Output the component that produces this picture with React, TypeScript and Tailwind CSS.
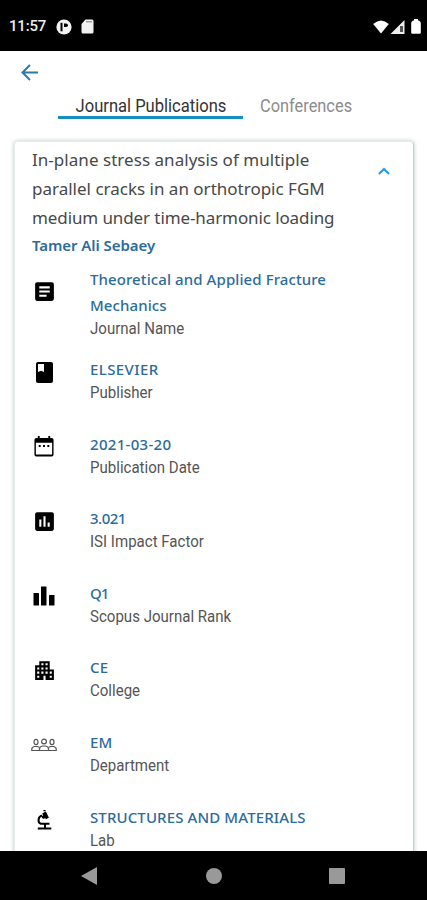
import type { ReactNode } from "react";
import clsx from "clsx";
import { MdApartment, MdArticle, MdInsertChart } from "react-icons/md";

function BookIcon() {
  return (
    <svg viewBox="0 0 17 21" className="h-[21px] w-[17px]">
      <rect width="17" height="21" rx="2" fill="currentColor" />
      <path d="M2 2h6v8L5 8.800 2 10z" fill="#fff" />
    </svg>
  );
}

function CalendarIcon() {
  return (
    <svg viewBox="0 0 20 22" className="h-[21px] w-5" fill="currentColor">
      <path
        fillRule="evenodd"
        d="M3.500 0h2v2h9V0h2v2h1.500a2 2 0 0 1 2 2v15.500a2 2 0 0 1-2 2H2a2 2 0 0 1-2-2V4a2 2 0 0 1 2-2h1.500V0zM1.500 7v12.500h17V7h-17z"
      />
      <path d="M4.500 9.500h2v2h-2zM9 9.500h2v2H9zM13.500 9.500h2v2h-2z" />
    </svg>
  );
}

function BarsIcon() {
  return (
    <svg viewBox="0 0 22 20" className="h-5 w-[22px]" fill="currentColor">
      <rect x="0.500" y="7" width="5.500" height="12.500" rx="0.500" />
      <rect x="8" y="0.500" width="5.500" height="19" rx="0.500" />
      <rect x="16" y="9" width="5.500" height="10.500" rx="0.500" />
    </svg>
  );
}

function PeopleIcon() {
  return (
    <svg viewBox="0 0 26 14" className="h-3.5 w-[26px] shrink-0" fill="none" stroke="#555" strokeWidth="1.200">
      <ellipse cx="5" cy="4" rx="2" ry="2.600" />
      <ellipse cx="13" cy="3.500" rx="2.400" ry="2.300" />
      <ellipse cx="21" cy="4" rx="2" ry="2.600" />
      <path d="M8.500 12.500H.8V11q0-1.800 2.700-2.500h3l2 1M17.500 12.500h7.700V11q0-1.800-2.700-2.500h-3l-2 1" />
      <path d="M8.500 12.500V11q0-2.500 3-3h3q3 .5 3 3v1.500z" />
    </svg>
  );
}

function MicroscopeIcon() {
  return (
    <svg viewBox="0 0 15 20" className="h-5 w-[15px]" fill="none" stroke="currentColor">
      <path d="M7 2.500 9.500 7.500" strokeWidth="4" />
      <path d="M6.500.8 8.500.2M8.500 8.500l3-1.500" strokeWidth="1.500" />
      <path d="M5 5.500C1 6.500.2 12.500 4 13.800h8.500" strokeWidth="2" />
      <path d="M8 14v4M.8 18.500h13.500" strokeWidth="2" />
      <circle cx="6.500" cy="7" r="1.300" fill="currentColor" />
    </svg>
  );
}

type Detail = {
  icon: ReactNode;
  value: string;
  valueClass: string;
  label: string;
};

const details: Detail[] = [
  {
    icon: <MdArticle className="size-[25px] shrink-0" />,
    value: "Theoretical and Applied Fracture Mechanics",
    valueClass: "tracking-[0.090px]",
    label: "Journal Name",
  },
  { icon: <BookIcon />, value: "ELSEVIER", valueClass: "tracking-[0.4px]", label: "Publisher" },
  { icon: <CalendarIcon />, value: "2021-03-20", valueClass: "tracking-[0.3px]", label: "Publication Date" },
  { icon: <MdInsertChart className="size-[25px] shrink-0" />, value: "3.021", valueClass: "tracking-[-0.5px]", label: "ISI Impact Factor" },
  { icon: <BarsIcon />, value: "Q1", valueClass: "tracking-[-1px]", label: "Scopus Journal Rank" },
  { icon: <MdApartment className="size-[25px] shrink-0" />, value: "CE", valueClass: "tracking-[0.3px]", label: "College" },
  { icon: <PeopleIcon />, value: "EM", valueClass: "tracking-[0.1px]", label: "Department" },
  { icon: <MicroscopeIcon />, value: "STRUCTURES AND MATERIALS", valueClass: "tracking-[0.120px]", label: "Lab" },
];

function StatusBar() {
  return (
    <header className="flex h-[51px] shrink-0 items-center bg-black pl-[9px] pr-1.5 pt-0.5 text-[#eee]">
      <span className="w-12 font-['Roboto'] text-[15px] font-medium tracking-[-0.2px]">11:57</span>
      <svg viewBox="0 0 16 16" className="-ml-px h-4 w-4">
        <circle cx="8" cy="8" r="7.600" fill="#f2f2f2" />
        <path d="M5.500 3.800v8.500" fill="none" stroke="#000" strokeWidth="2" />
        <path d="M8 4.500h2q2 0 2 1.800t-2 1.800H8z" fill="#000" />
      </svg>
      <svg viewBox="0 0 13 15" className="ml-[9px] h-[15px] w-[13px]">
        <path d="M4.500.5H11a1.500 1.500 0 0 1 1.500 1.500v11a1.500 1.500 0 0 1-1.500 1.500H2A1.500 1.500 0 0 1 .5 13V5z" fill="#f2f2f2" />
        <path d="M5 2.800h6" stroke="#777" strokeWidth="1" />
      </svg>
      <svg viewBox="0 0 16 14" className="ml-auto h-3.5 w-4" fill="#fff">
        <path d="M8 13.500.2 4Q8-3 15.800 4z" />
      </svg>
      <svg viewBox="0 0 15 14" className="ml-px h-3.5 w-[15px]">
        <path d="M14.500 0v14H.5z" fill="#eee" />
        <path d="M10 6h3v6h-3z" fill="#555" />
      </svg>
      <svg viewBox="0 0 10 15" className="ml-1.5 h-[15px] w-2.5" fill="#fff">
        <path d="M3 0h4v1.500h1Q9.800 2.500 9.800 4v9.500a1.300 1.300 0 0 1-1.300 1.300h-7A1.300 1.300 0 0 1 .2 13.500V4Q.2 2.500 2 1.500h1z" />
      </svg>
    </header>
  );
}

function Tabs() {
  return (
    <nav className="flex pl-[58px] font-['Roboto'] text-[18px] leading-[26px]">
      <div className="flex h-[26px] w-[185px] justify-center border-b-[3px] border-[#188dc4] text-[#333]">
        <span className="origin-center scale-x-[0.92] whitespace-nowrap">Journal Publications</span>
      </div>
      <span className="ml-[17px] origin-left scale-x-[0.91] whitespace-nowrap text-[#8c8c8c]">Conferences</span>
    </nav>
  );
}

function DetailRow({ detail, tall }: { detail: Detail; tall: boolean }) {
  return (
    <div className={clsx("flex shrink-0 items-start", tall ? "h-[90px]" : "h-[74.600px]")}>
      <div className={clsx("flex w-[58px] shrink-0 items-center text-black", tall ? "h-[51px]" : "h-[32px]")}>
        <div className="flex w-[24px] justify-center">{detail.icon}</div>
      </div>
      <div className="w-[260px]">
        <p className={clsx("text-[15px] font-medium leading-[26px] text-[#2c6c9c]", detail.valueClass)}>{detail.value}</p>
        <p className="origin-left scale-x-[0.885] whitespace-nowrap font-['Roboto'] text-[17px] leading-[21px] text-[#555]">
          {detail.label}
        </p>
      </div>
    </div>
  );
}

function NavBar() {
  return (
    <footer className="flex h-[49px] shrink-0 items-center justify-between bg-black pl-[81px] pr-[82px]">
      <svg viewBox="0 0 16 18" className="h-[18px] w-4" fill="#999">
        <path d="M16 0v18L0 9z" />
      </svg>
      <div className="ml-0.5 size-4 rounded-full bg-[#999]" />
      <div className="size-4 rounded-[1px] bg-[#999]" />
    </footer>
  );
}

export default function App() {
  return (
    <div className="flex h-[900px] w-[427px] flex-col overflow-hidden bg-white font-['Noto_Sans',sans-serif]">
      <StatusBar />
      <div className="h-[42px] shrink-0 pl-[21px] pt-[13px]">
        <svg viewBox="0 0 17 17" className="size-[17px]" fill="none" stroke="#2c79ae" strokeWidth="2">
          <path d="M17 8.500H2M9 1 1.500 8.500 9 16" />
        </svg>
      </div>
      <Tabs />
      <main className="flex min-h-0 flex-1 overflow-hidden px-[14px] pt-[22px]">
        <article className="h-[760px] w-[400px] shrink-0 rounded border border-[#e6ecec] border-r-[#c2d0d0] bg-white pl-[17px] pt-[3px] shadow-[0_0_4px_#b8c8c8]">
          <div className="flex">
            <h1 className="w-[320px] whitespace-nowrap text-[17px] leading-[29px] text-[#484848]">
              <span className="block tracking-[0.040px]">In-plane stress analysis of multiple</span>
              <span className="block">parallel cracks in an orthotropic FGM</span>
              <span className="block tracking-[-0.1px]">medium under time-harmonic loading</span>
            </h1>
            <svg viewBox="0 0 12 8" className="ml-[26px] mt-[22px] h-2 w-3" fill="none" stroke="#2196f3" strokeWidth="2">
              <path d="m1 7 5-5 5 5" />
            </svg>
          </div>
          <p className="text-[15px] font-semibold leading-[26px] tracking-[-0.060px] text-[#2c6c9c]">Tamer Ali Sebaey</p>
          <section className="mt-2 flex flex-col">
            {details.map((detail, i) => (
              <DetailRow key={detail.label} detail={detail} tall={i === 0} />
            ))}
          </section>
        </article>
      </main>
      <NavBar />
    </div>
  );
}
